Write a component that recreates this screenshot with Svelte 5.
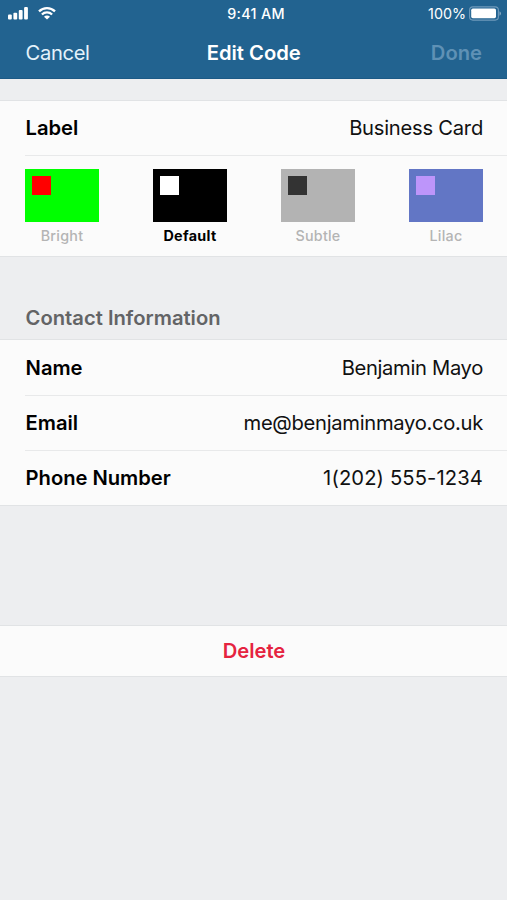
<script>
  let codeLabel = $state('Business Card');
  let selected = $state('Default');

  const themes = [
    { name: 'Bright', background: '#00ff00', marker: '#ff0000' },
    { name: 'Default', background: '#000000', marker: '#ffffff' },
    { name: 'Subtle', background: '#b3b3b3', marker: '#333333' },
    { name: 'Lilac', background: '#6276c5', marker: '#bd95fa' }
  ];

  const contact = [
    { id: 'name', label: 'Name', value: 'Benjamin Mayo' },
    { id: 'email', label: 'Email', value: 'me@benjaminmayo.co.uk' },
    { id: 'phone', label: 'Phone Number', value: '1(202) 555-1234' }
  ];
</script>

<div class="screen">
  <header>
    <div class="status">
      <div class="signal">
        <svg width="20" height="14" viewBox="0 0 20 14" fill="#fff">
          <rect x="0" y="8.5" width="3.8" height="4.9" rx="1" />
          <rect x="5.4" y="6.7" width="3.8" height="6.7" rx="1" />
          <rect x="10.8" y="4" width="3.8" height="9.4" rx="1" />
          <rect x="16.1" y="1" width="3.8" height="12.4" rx="1" />
        </svg>
        <svg width="18" height="14" viewBox="0 0 18 14">
          <g fill="none" stroke="#fff" stroke-width="2.3">
            <path d="M1 5.4a11.4 11.4 0 0 1 16 0" />
            <path d="M3.9 8.5a7.2 7.2 0 0 1 10.2 0" />
          </g>
          <path d="M9 13.6 6 10.7a4.2 4.2 0 0 1 6 0z" fill="#fff" />
        </svg>
      </div>
      <span class="time">9:41 AM</span>
      <div class="power">
        <span class="percent">100%</span>
        <svg width="33" height="15" viewBox="0 0 33 15">
          <rect x="0.6" y="0.9" width="28.8" height="13.2" rx="3.3" fill="none" stroke="#6f9abb" stroke-width="1.1" />
          <rect x="2.2" y="2.6" width="24.8" height="9.6" rx="1.6" fill="#fff" />
          <path d="M30.5 5.3c2 .8 2 3.6 0 4.4z" fill="#86a9c2" />
        </svg>
      </div>
    </div>
    <nav>
      <button class="cancel">Cancel</button>
      <h1>Edit Code</h1>
      <button class="done" disabled>Done</button>
    </nav>
  </header>

  <section class="group code">
    <div class="row">
      <span class="label">Label</span>
      <span class="value business">{codeLabel}</span>
    </div>
    <div class="themes">
      {#each themes as theme}
        <button
          class="theme"
          class:selected={selected === theme.name}
          onclick={() => (selected = theme.name)}
        >
          <span class="swatch" style="background: {theme.background};">
            <span class="marker" style="background: {theme.marker};"></span>
          </span>
          <span class="theme-name">{theme.name}</span>
        </button>
      {/each}
    </div>
  </section>

  <h2>Contact Information</h2>
  <section class="group">
    {#each contact as field}
      <div class="row">
        <span class="label">{field.label}</span>
        <span class="value {field.id}">{field.value}</span>
      </div>
    {/each}
  </section>

  <button class="delete">Delete</button>
</div>

<style>
  :global(body) {
    background: #edeef0;
  }
  .screen {
    min-height: 900px;
    background: #edeef0;
    color: #111;
    font-family: Inter, "Liberation Sans", sans-serif;
    font-size: 20.2px;
    line-height: 24px;
    white-space: nowrap;
  }
  button {
    padding: 0;
    border: none;
    background: none;
    color: inherit;
    font: inherit;
  }
  header {
    box-sizing: border-box;
    height: 79px;
    background: #226390;
    color: #fff;
    border-bottom: 1px solid #1c5a86;
  }
  .status {
    display: grid;
    grid-template-columns: 1fr auto 1fr;
    align-items: center;
    height: 27px;
    padding: 0 5px 0 8px;
    font-size: 14.3px;
    line-height: 18px;
  }
  .signal {
    display: flex;
    gap: 10px;
    padding-bottom: 1px;
  }
  .time {
    padding-left: 2px;
    font-weight: 500;
    letter-spacing: 0.35px;
  }
  .power {
    display: flex;
    justify-content: flex-end;
    align-items: center;
    gap: 3px;
  }
  nav {
    display: grid;
    grid-template-columns: 1fr auto 1fr;
    align-items: center;
    height: 51px;
    padding: 0 25px 0 25.5px;
  }
  .cancel {
    justify-self: start;
    color: #e4f2fb;
    letter-spacing: -0.35px;
  }
  .done {
    justify-self: end;
    color: #5f91b5;
    font-weight: 600;
  }
  h1, h2 {
    margin: 0;
    font-size: inherit;
    font-weight: 600;
  }
  .group {
    border-top: 1px solid #e1e3e5;
    border-bottom: 1px solid #e1e3e5;
    background: #fbfbfb;
  }
  .code {
    margin-top: 21px;
  }
  .row {
    display: flex;
    justify-content: space-between;
    align-items: center;
    box-sizing: border-box;
    height: 55.3px;
    margin-left: 25px;
    padding: 0 24px 0 0.6px;
    border-bottom: 1px solid #e8e9ea;
  }
  .row:last-child {
    height: 54px;
    border-bottom: none;
  }
  .label {
    color: #000;
    font-weight: 600;
    letter-spacing: -0.03px;
  }
  .business {
    letter-spacing: -0.25px;
  }
  .name {
    letter-spacing: -0.33px;
  }
  .email {
    letter-spacing: -0.3px;
  }
  .phone {
    letter-spacing: 0.12px;
  }
  .themes {
    display: flex;
    justify-content: space-between;
    height: 99.7px;
    box-sizing: border-box;
    padding: 13px 24px 0 25px;
  }
  .theme {
    display: flex;
    flex-direction: column;
    align-items: center;
    width: 74px;
    color: #b4b4b4;
    font-size: 14.3px;
    font-weight: 500;
    line-height: 18px;
    letter-spacing: 0.25px;
  }
  .theme.selected {
    color: #000;
    font-weight: 700;
    letter-spacing: 0.35px;
  }
  .swatch {
    box-sizing: border-box;
    width: 74px;
    height: 52.6px;
    padding: 7px;
    margin-bottom: 5.4px;
  }
  .marker {
    display: block;
    width: 19px;
    height: 19px;
  }
  h2 {
    margin: 49px 0 9.4px 25.6px;
    color: #636466;
  }
  .delete {
    display: block;
    box-sizing: border-box;
    width: 100%;
    height: 51.6px;
    margin-top: 119px;
    padding-left: 1px;
    border-top: 1px solid #e1e3e5;
    border-bottom: 1px solid #e1e3e5;
    background: #fbfbfb;
    color: #e5233f;
    font-weight: 600;
  }
</style>
